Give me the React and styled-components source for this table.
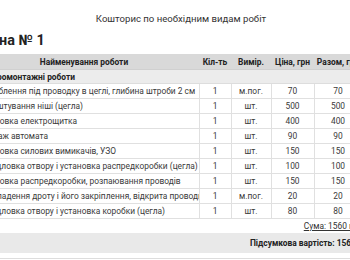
import React from 'react';
import styled, { createGlobalStyle } from 'styled-components';

const Global = createGlobalStyle`
  html, body {
    margin: 0;
    padding: 0;
    overflow: hidden;
    background: #fff;
  }
  body {
    font-family: Roboto, "Liberation Sans", Arial, sans-serif;
    color: #333;
  }
`;

const Page = styled.div`
  width: 424px;
  margin-left: -31px;
  padding-top: 12px;
`;

const Title = styled.div`
  text-align: center;
  font-size: 9.6px;
  line-height: 14px;
  color: #333;
`;

const Heading = styled.h2`
  margin: 6px 0 0 5px;
  font-size: 14.4px;
  line-height: 17px;
  font-weight: 700;
  color: #222;
`;

const Table = styled.table`
  width: 393px;
  margin-top: 5px;
  border-collapse: collapse;
  table-layout: fixed;
  font-size: 8.4px;
`;

const Head = styled.th`
  background: #d9d9d9;
  color: #222;
  font-weight: 700;
  height: 15px;
  padding: 0;
  text-align: center;
  border-bottom: 1px solid #d0d0d0;
`;

const Section = styled.td`
  background: #ececec;
  font-weight: 700;
  color: #222;
  height: 13px;
  padding: 0 0 0 5px;
  border-bottom: 1px solid #ddd;
`;

const Cell = styled.td`
  height: 14px;
  padding: 0 ${p => (p.$left ? '8px' : '0')};
  text-align: ${p => (p.$left ? 'left' : 'center')};
  border: 1px solid #e0e0e0;
  border-top: none;
  color: #3a3a3a;
  white-space: nowrap;
  overflow: hidden;
  &:first-child { border-left: none; }
`;

const Sum = styled.div`
  width: 393px;
  text-align: right;
  font-size: 8.4px;
  line-height: 12px;
  margin-top: 1px;
  a {
    color: #333;
    text-decoration: underline;
  }
`;

const Total = styled.div`
  width: 402px;
  margin-top: 1px;
  background: #e9e9e9;
  height: 20px;
  display: flex;
  align-items: center;
  justify-content: flex-end;
  font-size: 8.4px;
  font-weight: 700;
  color: #222;
  border-bottom: 5px solid #fff;
`;

const Rule = styled.div`
  width: 402px;
  border-top: 1px solid #ddd;
`;

const rows = [
  ['Штроблення під проводку в цеглі, глибина штроби 2 см', 'м.пог.', 70],
  ['Облаштування ніші (цегла)', 'шт.', 500],
  ['Установка електрощитка', 'шт.', 400],
  ['Монтаж автомата', 'шт.', 90],
  ['Установка силових вимикачів, УЗО', 'шт.', 150],
  ['Свердловка отвору і установка распредкоробки (цегла)', 'шт.', 100],
  ['Установка распредкоробки, розпаювання проводів', 'шт.', 150],
  ['Прокладення дроту і його закріплення, відкрита проводка', 'м.пог.', 20],
  ['Свердловка отвору і установка коробки (цегла)', 'шт.', 80],
];

export default function App() {
  return (
    <>
      <Global />
      <Page>
        <Title>Кошторис по необхідним видам робіт</Title>
        <Heading>Ванна № 1</Heading>
        <Table>
          <colgroup>
            <col style={{ width: 230 }} />
            <col style={{ width: 32 }} />
            <col style={{ width: 40 }} />
            <col style={{ width: 43 }} />
            <col style={{ width: 48 }} />
          </colgroup>
          <thead>
            <tr>
              <Head>Найменування роботи</Head>
              <Head>Кіл-ть</Head>
              <Head>Вимір.</Head>
              <Head>Ціна, грн</Head>
              <Head>Разом, грн</Head>
            </tr>
          </thead>
          <tbody>
            <tr>
              <Section colSpan={5}>Електромонтажні роботи</Section>
            </tr>
            {rows.map(([name, unit, price]) => (
              <tr key={name}>
                <Cell $left>{name}</Cell>
                <Cell>1</Cell>
                <Cell>{unit}</Cell>
                <Cell>{price}</Cell>
                <Cell>{price}</Cell>
              </tr>
            ))}
          </tbody>
        </Table>
        <Sum><a>Сума: 1560 грн</a></Sum>
        <Total>Підсумкова вартість: 1560 грн</Total>
        <Rule />
      </Page>
    </>
  );
}
